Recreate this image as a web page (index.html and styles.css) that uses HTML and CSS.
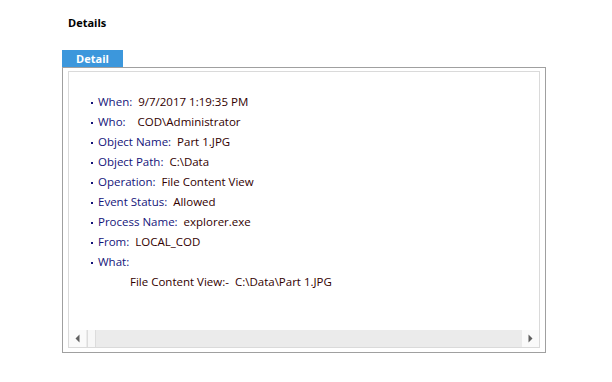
FILE: index.html
```html
<!DOCTYPE html>
<html>
<head>
<meta charset="utf-8">
<link rel="stylesheet" href="styles.css">
</head>
<body>
<div class="page">
  <h1 class="title">Details</h1>
  <div class="tab">Detail</div>
  <div class="panel">
    <div class="inner">
      <div class="content">
        <ul class="list">
          <li><span class="label">When:</span><span class="value">  9/7/2017 1:19:35 PM</span></li>
          <li><span class="label">Who:</span><span class="value">    COD\Administrator</span></li>
          <li><span class="label">Object Name:</span><span class="value">  Part 1.JPG</span></li>
          <li><span class="label">Object Path:</span><span class="value">  C:\Data</span></li>
          <li><span class="label">Operation:</span><span class="value">  File Content View</span></li>
          <li><span class="label">Event Status:</span><span class="value">  Allowed</span></li>
          <li><span class="label">Process Name:</span><span class="value">  explorer.exe</span></li>
          <li><span class="label">From:</span><span class="value">  LOCAL_COD</span></li>
          <li><span class="label">What:</span></li>
        </ul>
        <div class="what">File Content View:-  C:\Data\Part 1.JPG</div>
      </div>
      <div class="hscroll">
        <div class="sbtn"><svg width="17" height="17" viewBox="0 0 17 17"><polygon points="6.5,8.5 10.5,4.5 10.5,12.5" fill="#5f5f5f"/></svg></div>
        <div class="thumb"></div>
        <div class="track"></div>
        <div class="sbtn"><svg width="17" height="17" viewBox="0 0 17 17"><polygon points="10.5,8.5 6.5,4.5 6.5,12.5" fill="#5f5f5f"/></svg></div>
      </div>
    </div>
  </div>
</div>
</body>
</html>
```
FILE: styles.css
```css
html, body {
  margin: 0;
  padding: 0;
  background: #ffffff;
}
.page {
  padding: 15px 0 0 62px;
  font-family: "Open Sans", "Noto Sans", sans-serif;
}
.title {
  margin: 0 0 0 6px;
  font-size: 11px;
  font-weight: bold;
  color: #000;
  line-height: 16px;
  height: 19px;
}
.tab {
  margin-top: 16px;
  width: 61px;
  height: 17px;
  background: #3c97dc;
  color: #fff;
  font-size: 11px;
  font-weight: bold;
  line-height: 17px;
  text-align: center;
}
.panel {
  width: 472px;
  height: 277px;
  border: 1px solid #a0a0a0;
  padding: 3px 5px 4px 5px;
}
.inner {
  height: 275px;
  border: 1px solid #dadada;
  display: flex;
  flex-direction: column;
}
.content {
  flex: 1;
  padding-top: 20px;
  font-size: 11.5px;
}
.list {
  list-style: none;
  margin: 0;
  padding: 0 0 0 29px;
}
.list li {
  height: 20px;
  line-height: 20px;
  white-space: pre;
  position: relative;
}
.list li::before {
  content: "";
  position: absolute;
  left: -7px;
  top: 10px;
  width: 2px;
  height: 2px;
  background: #14147a;
}
.label {
  color: #14147a;
}
.value {
  color: #320000;
}
.what {
  padding-left: 61px;
  height: 20px;
  line-height: 20px;
  white-space: pre;
  color: #320000;
}
.hscroll {
  height: 17px;
  display: flex;
  background: #ebebeb;
}
.sbtn {
  width: 17px;
  height: 17px;
  background: #fafafa;
}
.thumb {
  width: 7px;
  height: 17px;
  margin-left: 1px;
  background: #f7f7f7;
  border-left: 1px solid #dcdcdc;
}
.track {
  flex: 1;
  background: #ebebeb;
  border-left: 1px solid #dcdcdc;
}
```
